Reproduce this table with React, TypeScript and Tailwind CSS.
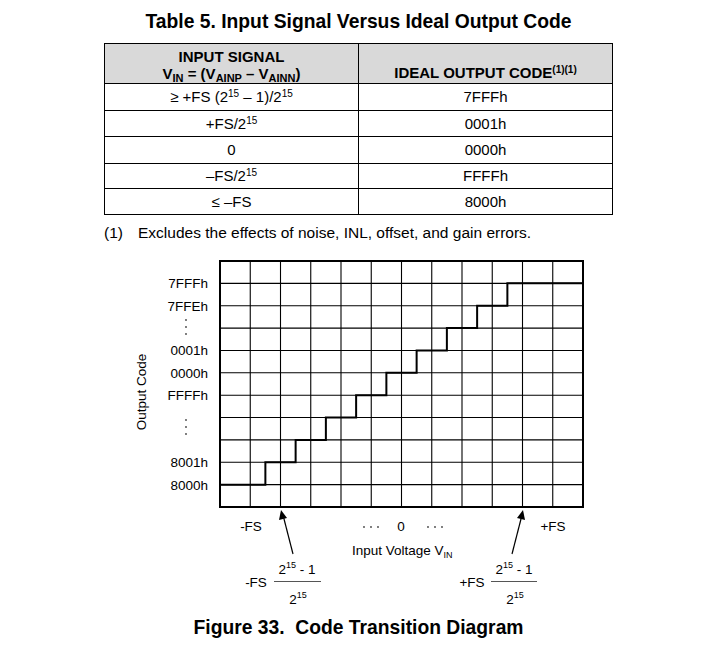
import React from 'react';

const X0 = 220;
const X1 = 583;
const Y0 = 259;
const Y1 = 505;
const COLS = 12;
const ROWS = 11;
const colW = (X1 - X0) / COLS;
const rowH = (Y1 - Y0) / ROWS;
const gy = (j: number) => Y0 + j * rowH;
const gx = (i: number) => X0 + i * colW;

const rows = [
  { input: <>≥ +FS (2<sup className="text-[10px]">15</sup> – 1)/2<sup className="text-[10px]">15</sup></>, code: '7FFFh' },
  { input: <>+FS/2<sup className="text-[10px]">15</sup></>, code: '0001h' },
  { input: <>0</>, code: '0000h' },
  { input: <>–FS/2<sup className="text-[10px]">15</sup></>, code: 'FFFFh' },
  { input: <>≤ –FS</>, code: '8000h' },
];

const yLabels: [number, string][] = [
  [1, '7FFFh'],
  [2, '7FFEh'],
  [4, '0001h'],
  [5, '0000h'],
  [6, 'FFFFh'],
  [9, '8001h'],
  [10, '8000h'],
];

function staircase() {
  const pts: string[] = [`${X0},${gy(10)}`];
  for (let k = 0; k < 9; k++) {
    const x = X0 + (1.5 + k) * colW;
    pts.push(`${x},${gy(10 - k)}`);
    pts.push(`${x},${gy(9 - k)}`);
  }
  pts.push(`${X1},${gy(1)}`);
  return pts.join(' ');
}

function Fraction({ cx, lx1, lx2, label, labelX }: { cx: number; lx1: number; lx2: number; label: string; labelX: number }) {
  return (
    <g>
      <text x={labelX} y={585} textAnchor="middle" fontSize="13.5">{label}</text>
      <text x={cx} y={572} textAnchor="middle" fontSize="13.5">
        2<tspan fontSize="9" dy="-6">15</tspan><tspan dy="6"> - 1</tspan>
      </text>
      <line x1={lx1} x2={lx2} y1={579.5} y2={579.5} stroke="#555" strokeWidth="1" />
      <text x={cx + 1} y={602} textAnchor="middle" fontSize="13.5">
        2<tspan fontSize="9" dy="-6">15</tspan>
      </text>
    </g>
  );
}

export default function App() {
  return (
    <div className="w-[703px] h-[655px] bg-white text-black font-['Liberation_Sans',Arial,sans-serif]">
      {/* Table title */}
      <div className="ml-[104px] w-[509px] h-[43px] flex items-center justify-center">
        <h2 className="text-[19.3px] font-bold leading-none">Table 5. Input Signal Versus Ideal Output Code</h2>
      </div>

      {/* Table */}
      <table className="ml-[104px] w-[509px] border-collapse border border-black text-[15px] leading-none">
        <thead>
          <tr className="bg-[#d9d9d9] h-[40px] font-bold">
            <th className="w-[254px] border border-black align-bottom pb-[2px] font-bold">
              <div>INPUT SIGNAL</div>
              <div className="mt-[2px]">
                V<sub className="text-[11px]">IN</sub> = (V<sub className="text-[11px]">AINP</sub> – V<sub className="text-[11px]">AINN</sub>)
              </div>
            </th>
            <th className="border border-black align-bottom pb-[3px] font-bold">
              IDEAL OUTPUT CODE<sup className="text-[10px]">(1)(1)</sup>
            </th>
          </tr>
        </thead>
        <tbody>
          {rows.map((r, i) => (
            <tr key={i} className={i < 3 ? 'h-[26.5px]' : 'h-[25.5px]'}>
              <td className="border border-black text-center">{r.input}</td>
              <td className="border border-black text-center">{r.code}</td>
            </tr>
          ))}
        </tbody>
      </table>

      {/* Footnote */}
      <div className="ml-[104px] mt-[9px] h-[28px] flex text-[15.5px] leading-[18px]">
        <span className="w-[34px]">(1)</span>
        <span>Excludes the effects of noise, INL, offset, and gain errors.</span>
      </div>

      {/* Figure */}
      <svg width="703" height="360" viewBox="0 250 703 360" className="block font-['Liberation_Sans',Arial,sans-serif]" fill="#000">
        {Array.from({ length: COLS - 1 }, (_, i) => (
          <line key={'v' + i} x1={gx(i + 1)} x2={gx(i + 1)} y1={Y0} y2={Y1} stroke="#000" strokeWidth="1.1" />
        ))}
        {Array.from({ length: ROWS - 1 }, (_, j) => (
          <line key={'h' + j} x1={X0} x2={X1} y1={gy(j + 1)} y2={gy(j + 1)} stroke="#000" strokeWidth="1.1" />
        ))}
        <rect x={X0} y={Y0} width={X1 - X0} height={Y1 - Y0} fill="none" stroke="#000" strokeWidth="2" />
        <polyline points={staircase()} fill="none" stroke="#000" strokeWidth="2" />

        {yLabels.map(([j, t]) => (
          <text key={t} x={208} y={gy(j) + 5} textAnchor="end" fontSize="13.5">{t}</text>
        ))}
        {[318, 325, 332, 418, 425, 432].map((y) => (
          <circle key={y} cx={186} cy={y} r={0.9} fill="#444" />
        ))}
        <text x={146} y={390} textAnchor="middle" fontSize="13.5" transform="rotate(-90 146 390)">Output Code</text>

        {/* x axis labels */}
        <text x={251} y={529} textAnchor="middle" fontSize="13.5">-FS</text>
        <text x={553} y={529} textAnchor="middle" fontSize="13.5">+FS</text>
        <text x={401} y={529} textAnchor="middle" fontSize="13.5">0</text>
        {[364, 371, 378, 428, 435, 442].map((x) => (
          <circle key={x} cx={x} cy={525} r={0.9} fill="#444" />
        ))}
        <text x={352} y={553} fontSize="13.5">
          Input Voltage V<tspan fontSize="9" dy="3">IN</tspan>
        </text>

        {/* arrows */}
        <line x1={293} y1={552} x2={283.5} y2={515} stroke="#000" strokeWidth="1.2" />
        <polygon points="281,508 279,518 287,516" fill="#000" />
        <line x1={512} y1={552} x2={521.5} y2={515} stroke="#000" strokeWidth="1.2" />
        <polygon points="523,508 517,516 525,518" fill="#000" />

        <Fraction cx={297} lx1={274} lx2={321} label="-FS" labelX={256} />
        <Fraction cx={514} lx1={491} lx2={537} label="+FS" labelX={472} />
      </svg>

      {/* Caption */}
      <div className="ml-[104px] w-[509px] h-[32px] flex items-center justify-center">
        <h3 className="text-[19.3px] font-bold leading-none whitespace-pre">Figure 33.  Code Transition Diagram</h3>
      </div>
    </div>
  );
}
